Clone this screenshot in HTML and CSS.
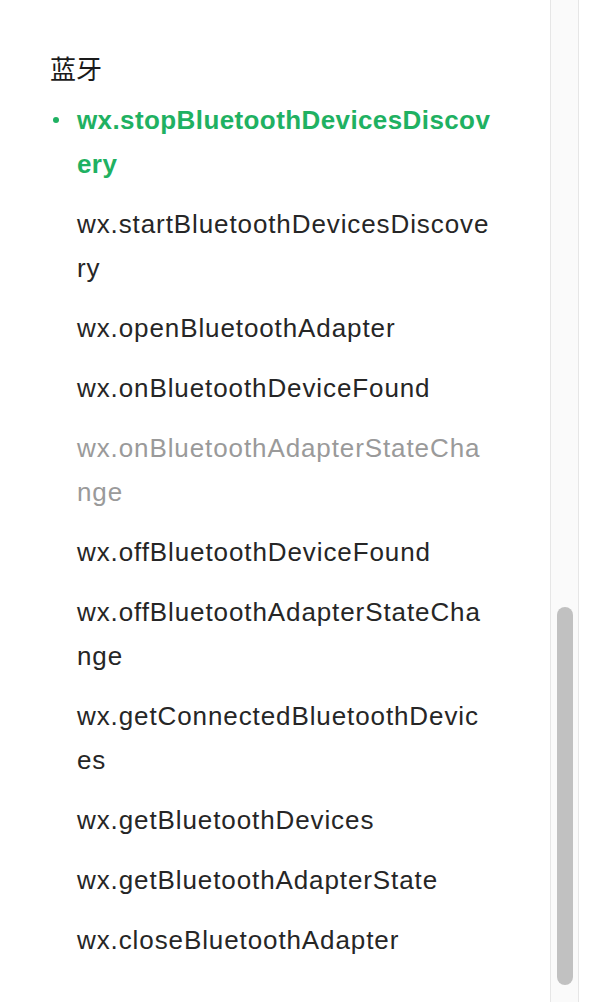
FILE: index.html
```html
<!DOCTYPE html>
<html lang="zh">
<head>
<meta charset="utf-8">
<title>蓝牙</title>
<link rel="stylesheet" href="styles.css">
</head>
<body>
<div class="page">
  <nav class="menu">
    <h2 class="menu-title">蓝牙</h2>
    <ul class="menu-list">
      <li class="menu-item active">wx.stopBluetoothDevicesDiscovery</li>
      <li class="menu-item">wx.startBluetoothDevicesDiscovery</li>
      <li class="menu-item">wx.openBluetoothAdapter</li>
      <li class="menu-item">wx.onBluetoothDeviceFound</li>
      <li class="menu-item muted">wx.onBluetoothAdapterStateChange</li>
      <li class="menu-item">wx.offBluetoothDeviceFound</li>
      <li class="menu-item">wx.offBluetoothAdapterStateChange</li>
      <li class="menu-item">wx.getConnectedBluetoothDevices</li>
      <li class="menu-item">wx.getBluetoothDevices</li>
      <li class="menu-item">wx.getBluetoothAdapterState</li>
      <li class="menu-item">wx.closeBluetoothAdapter</li>
    </ul>
  </nav>
  <div class="scrollbar">
    <div class="scroll-thumb"></div>
  </div>
  <div class="edge"></div>
</div>
</body>
</html>
```
FILE: styles.css
```css
html, body {
  margin: 0;
  padding: 0;
  background: #ffffff;
}
body {
  font-family: "Liberation Sans", Arial, "Noto Sans CJK SC", sans-serif;
  color: #222222;
}
.page {
  display: flex;
  height: 1002px;
  overflow: hidden;
}
.menu {
  flex: 1;
  padding: 50px 0 0 50px;
}
.menu-title {
  margin: 0;
  font-size: 26px;
  line-height: 36px;
  font-weight: normal;
  color: #1a1a1a;
  font-family: "Noto Sans CJK SC", sans-serif;
}
.menu-list {
  list-style: none;
  margin: 12px 0 0 0;
  padding: 0 0 0 27px;
  width: 414px;
}
.menu-item {
  position: relative;
  font-size: 26px;
  line-height: 44px;
  letter-spacing: 0.9px;
  margin-bottom: 16px;
  word-break: break-all;
  color: #262626;
}
.menu-item.active {
  color: #1fb162;
  font-weight: bold;
  letter-spacing: 0.4px;
}
.menu-item.active::before {
  content: "";
  position: absolute;
  left: -24px;
  top: 19px;
  width: 6px;
  height: 6px;
  border-radius: 50%;
  background: #1fb162;
}
.menu-item.muted {
  color: #9a9a9a;
}
.scrollbar {
  width: 29px;
  border-left: 1px solid #e6e6e6;
  border-right: 1px solid #e6e6e6;
  background: #fafafa;
  display: flex;
  flex-direction: column;
  justify-content: flex-end;
  padding-bottom: 17px;
  box-sizing: border-box;
}
.scroll-thumb {
  margin-left: 6px;
  width: 16px;
  height: 378px;
  border-radius: 8px;
  background: #c1c1c1;
}
.edge {
  width: 15px;
}
```
